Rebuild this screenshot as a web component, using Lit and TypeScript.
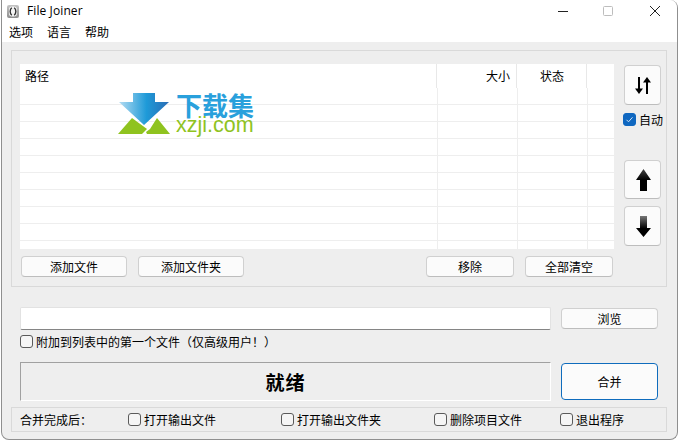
import { LitElement, html, css } from "lit";
import { customElement } from "lit/decorators.js";

const rowHeights = [17, 17, 17, 17, 17, 17, 17, 17, 17, 8];

@customElement("app-root")
export class AppRoot extends LitElement {
  static styles = css`
    :host {
      display: block;
      width: 679px;
      height: 441px;
      background: #fff;
      overflow: hidden;
      font-family: "Noto Sans CJK SC", "Noto Sans", sans-serif;
      font-size: 12px;
      color: #000;
      line-height: 16px;
    }
    * { box-sizing: border-box; }
    .win {
      margin-left: 1px;
      width: 677px;
      height: 440px;
      border: 1px solid #8f8f8f;
      border-top: 0;
      border-radius: 0 8px 8px 8px;
      background: #eee;
      overflow: hidden;
      display: flex;
      flex-direction: column;
    }
    .top { background: #fff; height: 42px; flex: none; }
    .title {
      height: 22px;
      display: flex;
      align-items: center;
      padding-left: 5px;
    }
    .appicon { width: 12px; height: 13px; margin-right: 8px; flex: none; }
    .title-text { font-family: "Open Sans", "Noto Sans", sans-serif; font-size: 12px; letter-spacing: 0.1px; flex: 1; }
    .winbtn { display: block; flex: none; }
    .gap-max { margin-left: 34px; }
    .gap-close { margin: 0 16px 0 35px; }
    .menu { display: flex; gap: 14px; padding-left: 7px; height: 20px; align-items: center; }
    .body { flex: 1; padding: 8px 10px 0 9px; display: flex; flex-direction: column; }
    .group {
      border: 1px solid #d9d9d9;
      height: 237px;
      padding: 13px 3px 8px 8px;
      display: flex;
      gap: 9px;
    }
    .left { width: 594px; flex: none; position: relative; }
    .table { background: #fff; height: 185px; overflow: hidden; }
    .thead { display: flex; height: 24px; }
    .th { border-right: 1px solid #e8e8e8; height: 24px; padding-top: 4px; }
    .th.path { width: 417px; padding-left: 5px; }
    .th.size { width: 80px; text-align: right; padding-right: 6px; }
    .th.state { width: 70px; padding-left: 23px; }
    .tr { display: flex; border-bottom: 1px solid #eee; }
    .tr.last { border-bottom: 0; }
    .td { border-right: 1px solid #eee; }
    .td.a { width: 418px; }
    .td.b { width: 80px; }
    .td.c { width: 70px; }
    .mark {
      position: absolute;
      left: 98px;
      top: 28px;
      display: flex;
      gap: 6px;
      pointer-events: none;
    }
    .mark svg { display: block; width: 52px; height: 42px; margin-top: 1px; }
    .marktext { display: flex; flex-direction: column; width: 80px; }
    .mark-cn { font-weight: 700; font-size: 26px; line-height: 25px; color: #29a0dc; height: 24px; }
    .mark-en { font-family: "Liberation Sans", sans-serif; font-size: 21.5px; line-height: 18px; color: #8fc31f; }
    .btns { display: flex; margin-top: 7px; padding-left: 1px; }
    .btn {
      height: 21px;
      border: 1px solid #d0d0d0;
      border-bottom-color: #bdbdbd;
      border-radius: 4px;
      background: #fbfbfb;
      display: flex;
      align-items: center;
      justify-content: center;
      flex: none;
    }
    .w106 { width: 106px; margin-right: 11px; }
    .w88 { width: 88px; }
    .spacer { width: 171px; flex: none; }
    .gap11 { margin-right: 11px; }
    .right { display: flex; flex-direction: column; width: 40px; padding-top: 1px; }
    .iconbtn { width: 37px; height: 40px; margin-left: 1px; }
    .iconbtn svg { display: block; }
    .auto { display: flex; align-items: center; gap: 3px; margin-top: 8px; height: 13px; white-space: nowrap; }
    .up { margin-top: 34px; height: 39px; padding-left: 2px; }
    .down { margin-top: 7px; height: 40px; padding-left: 2px; }
    .cb {
      width: 13px;
      height: 13px;
      border: 1px solid #5a5a5a;
      border-radius: 3px;
      background: #f5f5f5;
      flex: none;
      display: block;
    }
    .cb.on { background: #0f67c0; border-color: #0f67c0; }
    .cb.on svg { display: block; }
    .pathrow { display: flex; margin: 20px 0 0 9px; gap: 10px; align-items: flex-start; }
    .input {
      width: 531px;
      height: 23px;
      background: #fff;
      border: 1px solid #e2e2e2;
      border-bottom: 1px solid #858585;
      border-radius: 2px;
    }
    .browse { width: 97px; margin-top: 1px; }
    .check { display: flex; align-items: center; gap: 3px; white-space: nowrap; }
    .first { margin: 5px 0 0 9px; height: 13px; }
    .statusrow { display: flex; margin: 14px 0 0 9px; gap: 10px; align-items: flex-start; }
    .status {
      width: 531px;
      height: 39px;
      border: 1px solid;
      border-color: #a0a0a0 #fff #fff #a0a0a0;
      display: flex;
      align-items: center;
      justify-content: center;
      font-weight: 700;
      font-size: 19px;
      letter-spacing: 1px;
    }
    .merge { width: 97px; height: 37px; margin-top: 1px; border: 1px solid #0f6cbd; border-radius: 4px; }
    .after {
      border: 1px solid #d9d9d9;
      margin-top: 6px;
      height: 25px;
      padding-left: 8px;
      display: grid;
      grid-template-columns: 108px 153px 153px 126px auto;
      align-items: center;
    }
  `;

  render() {
    return html`
      <div class="win">
        <div class="top">
          <div class="title">
            <svg class="appicon" viewBox="0 0 12 13">
              <defs><linearGradient id="ai" x1="0" x2="0" y1="0" y2="1"><stop offset="0" stop-color="#c4c4c4" /><stop offset="1" stop-color="#8e8e8e" /></linearGradient></defs>
              <rect x="0" y="0" width="12" height="13" rx="2" fill="url(#ai)" />
              <rect x="2" y="1.500" width="8" height="10" rx="3" fill="#f4f4f4" />
              <path d="M4.800 2.800C2.600 4.500 2.600 8.500 4.800 10.200M7.200 2.800C9.400 4.500 9.400 8.500 7.200 10.200" fill="none" stroke="#333" stroke-width="1.400" />
            </svg>
            <span class="title-text">File Joiner</span>
            <svg class="winbtn" width="11" height="12" viewBox="0 0 11 12"><path d="M0 6.500h10" stroke="#222" stroke-width="1" /></svg>
            <svg class="winbtn gap-max" width="11" height="12" viewBox="0 0 11 12"><rect x=".5" y="1.500" width="9" height="9" rx="1" fill="none" stroke="#bdbdbd" /></svg>
            <svg class="winbtn gap-close" width="12" height="12" viewBox="0 0 12 12"><path d="M1 1l10 10M11 1L1 11" stroke="#222" stroke-width="1" /></svg>
          </div>
          <div class="menu"><span>选项</span><span>语言</span><span>帮助</span></div>
        </div>
        <div class="body">
          <div class="group">
            <div class="left">
              <div class="table">
                <div class="thead">
                  <div class="th path">路径</div>
                  <div class="th size">大小</div>
                  <div class="th state">状态</div>
                </div>
                ${rowHeights.map(
                  (h, i) => html`<div class="tr ${i === rowHeights.length - 1 ? "last" : ""}" style="height:${h}px">
                    <div class="td a"></div><div class="td b"></div><div class="td c"></div>
                  </div>`
                )}
              </div>
              <div class="mark">
                <svg viewBox="0 0 52 42">
                  <defs>
                    <linearGradient id="arrow" x1="0" x2="1" y1="0" y2="0">
                      <stop offset="0" stop-color="#b4dcf2" />
                      <stop offset="0.55" stop-color="#1e9ad8" />
                      <stop offset="1" stop-color="#2a6cb4" />
                    </linearGradient>
                  </defs>
                  <path d="M15 0h22v9h14L26 32 1 9h14z" fill="url(#arrow)" />
                  <path d="M14 25L0 41h24l5-5z" fill="#8fc31f" />
                  <path d="M39 25L52 41H29l-1-2 4-3z" fill="#8fc31f" />
                </svg>
                <div class="marktext">
                  <span class="mark-cn">下载集</span>
                  <span class="mark-en">xzji.com</span>
                </div>
              </div>
              <div class="btns">
                <div class="btn w106">添加文件</div>
                <div class="btn w106">添加文件夹</div>
                <div class="spacer"></div>
                <div class="btn w88 gap11">移除</div>
                <div class="btn w88">全部清空</div>
              </div>
            </div>
            <div class="right">
              <div class="btn iconbtn">
                <svg width="16" height="17" viewBox="0 0 16 17">
                  <path d="M4 0v13" stroke="#000" stroke-width="2" />
                  <path d="M0 11.500h8L4 17z" fill="#000" />
                  <path d="M12 17V4" stroke="#000" stroke-width="2" />
                  <path d="M8 5.500h8L12 0z" fill="#000" />
                </svg>
              </div>
              <div class="auto">
                <span class="cb on">
                  <svg width="11" height="11" viewBox="0 0 11 11"><path d="M2.500 5.800l2 2 4-4.500" fill="none" stroke="#cfe3f7" stroke-width="1" /></svg>
                </span>
                <span>自动</span>
              </div>
              <div class="btn iconbtn up">
                <svg width="15" height="22" viewBox="0 0 15 22">
                  <defs><linearGradient id="u" x1="0" x2="0" y1="0" y2="1"><stop offset="0" stop-color="#444" /><stop offset="0.5" stop-color="#000" /></linearGradient></defs>
                  <path d="M7.500 0l7.500 11h-4v11H4V11H0z" fill="url(#u)" />
                </svg>
              </div>
              <div class="btn iconbtn down">
                <svg width="15" height="21" viewBox="0 0 15 21">
                  <defs><linearGradient id="d" x1="0" x2="0" y1="0" y2="1"><stop offset="0" stop-color="#777" /><stop offset="0.6" stop-color="#000" /></linearGradient></defs>
                  <path d="M4 0h7v12h4l-7.500 9L0 12h4z" fill="url(#d)" />
                </svg>
              </div>
            </div>
          </div>
          <div class="pathrow">
            <div class="input"></div>
            <div class="btn browse">浏览</div>
          </div>
          <div class="check first"><span class="cb"></span><span>附加到列表中的第一个文件（仅高级用户！）</span></div>
          <div class="statusrow">
            <div class="status">就绪</div>
            <div class="btn merge">合并</div>
          </div>
          <div class="after">
            <span>合并完成后：</span>
            <div class="check"><span class="cb"></span><span>打开输出文件</span></div>
            <div class="check"><span class="cb"></span><span>打开输出文件夹</span></div>
            <div class="check"><span class="cb"></span><span>删除项目文件</span></div>
            <div class="check"><span class="cb"></span><span>退出程序</span></div>
          </div>
        </div>
      </div>
    `;
  }
}
